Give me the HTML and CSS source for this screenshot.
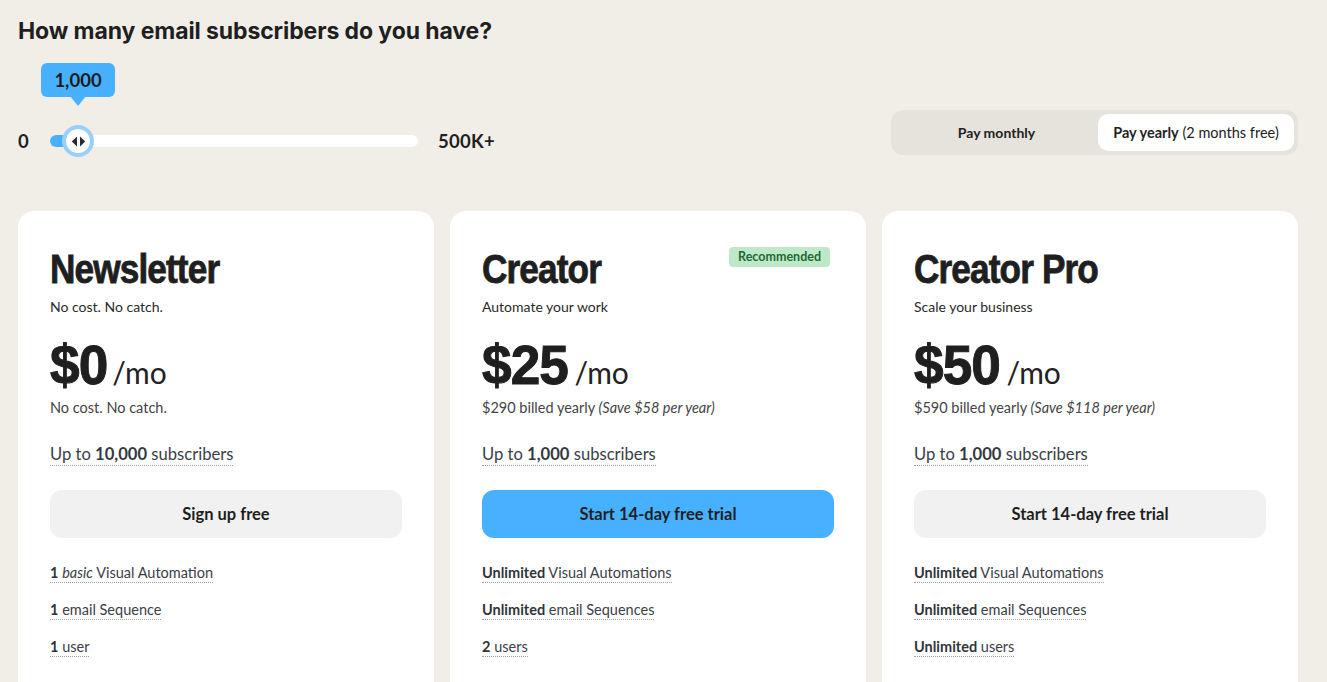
FILE: index.html
```html
<!DOCTYPE html>
<html lang="en">
<head>
<meta charset="utf-8">
<title>Pricing</title>
<link rel="stylesheet" href="styles.css">
</head>
<body>
<div class="page">
  <div class="top">
    <div class="slider-block">
      <h1 class="question">How many email subscribers do you have?</h1>
      <div class="slider-row">
        <span class="range-label">0</span>
        <div class="track">
          <div class="fill"></div>
          <div class="thumb">
            <svg width="15" height="11" viewBox="0 0 15 11"><path d="M6 0.5 L0.8 5.5 L6 10.5 Z" fill="#2b2b2b"/><path d="M9 0.5 L14.2 5.5 L9 10.5 Z" fill="#2b2b2b"/></svg>
          </div>
          <div class="tooltip">1,000</div>
        </div>
        <span class="range-label max">500K+</span>
      </div>
    </div>
    <div class="toggle">
      <button class="toggle-btn">Pay monthly</button>
      <button class="toggle-btn active"><b>Pay yearly</b> (2 months free)</button>
    </div>
  </div>

  <div class="cards">
    <div class="card">
      <h2 class="plan">Newsletter</h2>
      <p class="tagline">No cost. No catch.</p>
      <div class="price"><span class="amount">$0</span><span class="per">/mo</span></div>
      <p class="billing">No cost. No catch.</p>
      <p class="limit"><span class="dotted">Up to <b>10,000</b> subscribers</span></p>
      <button class="cta">Sign up free</button>
      <ul class="features">
        <li><span class="dotted"><b>1</b> <i>basic</i> Visual Automation</span></li>
        <li><span class="dotted"><b>1</b> email Sequence</span></li>
        <li><span class="dotted"><b>1</b> user</span></li>
      </ul>
    </div>
    <div class="card">
      <span class="badge">Recommended</span>
      <h2 class="plan">Creator</h2>
      <p class="tagline">Automate your work</p>
      <div class="price"><span class="amount">$25</span><span class="per">/mo</span></div>
      <p class="billing">$290 billed yearly <i>(Save $58 per year)</i></p>
      <p class="limit"><span class="dotted">Up to <b>1,000</b> subscribers</span></p>
      <button class="cta primary">Start 14-day free trial</button>
      <ul class="features">
        <li><span class="dotted"><b>Unlimited</b> Visual Automations</span></li>
        <li><span class="dotted"><b>Unlimited</b> email Sequences</span></li>
        <li><span class="dotted"><b>2</b> users</span></li>
      </ul>
    </div>
    <div class="card">
      <h2 class="plan">Creator Pro</h2>
      <p class="tagline">Scale your business</p>
      <div class="price"><span class="amount">$50</span><span class="per">/mo</span></div>
      <p class="billing">$590 billed yearly <i>(Save $118 per year)</i></p>
      <p class="limit"><span class="dotted">Up to <b>1,000</b> subscribers</span></p>
      <button class="cta">Start 14-day free trial</button>
      <ul class="features">
        <li><span class="dotted"><b>Unlimited</b> Visual Automations</span></li>
        <li><span class="dotted"><b>Unlimited</b> email Sequences</span></li>
        <li><span class="dotted"><b>Unlimited</b> users</span></li>
      </ul>
    </div>
  </div>
</div>
</body>
</html>
```

FILE: styles.css
```css
* { box-sizing: border-box; }
html, body { margin: 0; padding: 0; }
body {
  background: #f1eee8;
  font-family: "Lato", "Liberation Sans", sans-serif;
  color: #222;
  overflow: hidden;
}
.page {
  width: 1280px;
  margin-left: 18px;
  padding-top: 16px;
}
.top {
  display: flex;
  justify-content: space-between;
  align-items: flex-start;
}
.question {
  margin: 0;
  font-family: "Inter", "Lato", sans-serif;
  font-size: 23px;
  line-height: 30px;
  font-weight: 700;
  letter-spacing: -0.1px;
  color: #1f1f1f;
}
.slider-row {
  display: flex;
  align-items: center;
  margin-top: 79px;
  height: 32px;
}
.range-label {
  font-size: 18.5px;
  font-weight: 700;
  color: #1f1f1f;
  width: 32px;
}
.range-label.max { width: auto; margin-left: 20px; letter-spacing: 0.3px; }
.track {
  position: relative;
  width: 368px;
  height: 12px;
  border-radius: 6px;
  background: #fff;
}
.fill {
  width: 30px;
  height: 12px;
  border-radius: 6px;
  background: #47b1ff;
}
.thumb {
  position: absolute;
  left: 12px;
  top: -10px;
  width: 32px;
  height: 32px;
  border-radius: 50%;
  background: #fff;
  border: 4px solid #99d0fb;
  display: flex;
  align-items: center;
  justify-content: center;
}
.tooltip {
  position: absolute;
  left: -9px;
  top: -72px;
  width: 74px;
  height: 34px;
  border-radius: 6px;
  background: #47b1ff;
  color: #1a1a1a;
  font-size: 18.5px;
  font-weight: 700;
  display: flex;
  align-items: center;
  justify-content: center;
}
.tooltip::after {
  content: "";
  position: absolute;
  left: 29px;
  bottom: -9px;
  border-left: 8px solid transparent;
  border-right: 8px solid transparent;
  border-top: 10px solid #47b1ff;
}
.toggle {
  margin-top: 94px;
  width: 407px;
  height: 45px;
  padding: 4px;
  background: #e6e3dc;
  border-radius: 12px;
  display: grid;
  grid-template-columns: 203px 196px;
}
.toggle-btn {
  border: 0;
  background: transparent;
  font-family: inherit;
  font-size: 14px;
  font-weight: 700;
  color: #222;
  border-radius: 10px;
  padding: 0;
}
.toggle-btn.active {
  background: #fff;
  font-weight: 400;
  font-size: 14.5px;
}
.toggle-btn.active b { font-weight: 700; }

.cards {
  margin-top: 54px;
  display: grid;
  grid-template-columns: repeat(3, 416px);
  gap: 16px;
}
.card {
  position: relative;
  background: #fff;
  border-radius: 16px;
  padding: 36px 32px 60px;
  min-height: 520px;
}
.badge {
  position: absolute;
  top: 36px;
  right: 36px;
  height: 20px;
  padding: 0 9px;
  line-height: 20px;
  border-radius: 4px;
  background: #bde9c9;
  color: #1d6a33;
  font-size: 12.5px;
  font-weight: 700;
}
.plan {
  margin: 0;
  font-family: "Liberation Sans", "Arial", sans-serif;
  font-size: 40px;
  line-height: 44px;
  font-weight: 700;
  letter-spacing: -1px;
  -webkit-text-stroke: 0.8px #1f1f1f;
  color: #1f1f1f;
  display: inline-block;
  transform: scaleX(0.88);
  transform-origin: left center;
}
.tagline {
  margin: 6px 0 0;
  font-size: 14px;
  line-height: 20px;
  color: #2a2a2a;
}
.price {
  margin-top: 15px;
  display: flex;
  align-items: baseline;
  height: 60px;
}
.amount {
  font-family: "Liberation Sans", "Arial", sans-serif;
  font-size: 56px;
  font-weight: 700;
  letter-spacing: -1px;
  -webkit-text-stroke: 1px #1f1f1f;
  color: #1f1f1f;
  display: inline-block;
  transform: scaleX(0.95);
  transform-origin: left center;
}
.per {
  font-size: 30px;
  font-weight: 400;
  color: #222;
  margin-left: 2px;
}
.billing {
  margin: 6px 0 0;
  font-size: 14.5px;
  line-height: 20px;
  color: #444;
}
.limit {
  margin: 25px 0 0;
  font-size: 16.6px;
  line-height: 22px;
  color: #3b4048;
}
.limit b { color: #33383f; }
.dotted {
  border-bottom: 1px dotted #9aa0a8;
  padding-bottom: 1px;
}
.cta {
  display: block;
  width: 100%;
  margin-top: 25px;
  height: 48px;
  border: 0;
  border-radius: 12px;
  background: #f1f1f1;
  font-family: inherit;
  font-size: 16.5px;
  font-weight: 700;
  color: #1f1f1f;
}
.cta.primary { background: #47b1ff; }
.features {
  list-style: none;
  margin: 25px 0 0;
  padding: 0;
}
.features li {
  font-size: 14.5px;
  line-height: 20px;
  margin-bottom: 17px;
  color: #3b4048;
}
.features b { color: #2f343a; }
```
